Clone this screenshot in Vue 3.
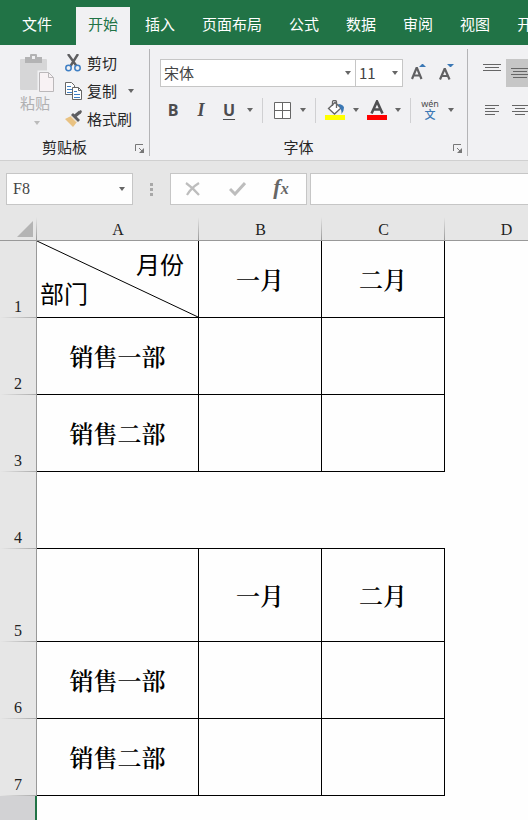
<script setup>
import { ref } from "vue";

const tabs = ["文件", "开始", "插入", "页面布局", "公式", "数据", "审阅", "视图", "开发工具"];
const activeTab = ref("开始");

const fontName = ref("宋体");
const fontSize = ref("11");
const cellName = ref("F8");
const formula = ref("");

const columns = ["A", "B", "C", "D"];

const rows = [
  { id: 1, cells: ["split", "一月", "二月"], boxed: true },
  { id: 2, cells: ["销售一部", "", ""], boxed: true },
  { id: 3, cells: ["销售二部", "", ""], boxed: true },
  { id: 4, cells: ["", "", ""], boxed: false },
  { id: 5, cells: ["", "一月", "二月"], boxed: true, tall: true },
  { id: 6, cells: ["销售一部", "", ""], boxed: true },
  { id: 7, cells: ["销售二部", "", ""], boxed: true },
];
</script>

<template>
  <div class="app">
    <nav class="tabs">
      <button
        v-for="tab in tabs"
        :key="tab"
        type="button"
        class="tab"
        :class="{ file: tab === '文件', active: tab === activeTab }"
        @click="activeTab = tab"
      >
        {{ tab }}
      </button>
    </nav>

    <div class="ribbon">
      <!-- Clipboard -->
      <section class="group clipboard">
        <div class="clip-body">
          <button type="button" class="paste">
            <svg width="35" height="39" viewBox="0 0 35 39">
              <rect x="0" y="5" width="27" height="31" rx="1" fill="#d6d6d7" />
              <path d="M5 3h5V1q0-1 1-1h5q1 0 1 1v2h5v6H5z" fill="#b3b3b4" />
              <rect x="12" y="2" width="3" height="3" fill="#f1f1f3" />
              <path d="M18.500 17.500h11l5 5v15h-16z" fill="#f8f2f4" stroke="#f1f1f3" stroke-width="2" />
              <path d="M19.500 18.500h9l5 5v14h-14z" fill="#f8f2f4" stroke="#bbb8ba" />
              <path d="M28.500 18.500v5h5" fill="none" stroke="#bbb8ba" />
            </svg>
            <span>粘贴</span>
            <i class="arrow"></i>
          </button>
          <div class="clip-list">
            <button type="button" class="clip-item">
              <svg width="17" height="18" viewBox="0 0 17 18">
                <path d="M3 0l8.500 12M13 0L5.500 12" fill="none" stroke="#5e5e60" stroke-width="2.400" />
                <circle cx="3.500" cy="14" r="2.700" fill="#f1f1f3" stroke="#3f7fc4" stroke-width="1.500" />
                <circle cx="12.500" cy="14" r="2.700" fill="#f1f1f3" stroke="#3f7fc4" stroke-width="1.500" />
              </svg>
              剪切
            </button>
            <button type="button" class="clip-item">
              <svg width="17" height="18" viewBox="0 0 17 18">
                <path d="M.5.5h6l3 3v9h-9z" fill="#fff" stroke="#666" />
                <path d="M2 4.500h4M2 7.500h5M2 10.500h5" stroke="#3f7fc4" />
                <path d="M7.500 5.500h6l3 3v9h-9z" fill="#fff" stroke="#666" />
                <path d="M13.500 5.500v3h3" fill="none" stroke="#666" />
                <path d="M9 9.500h3M9 12.500h6M9 15.500h6" stroke="#3f7fc4" />
              </svg>
              复制
              <i class="arrow"></i>
            </button>
            <button type="button" class="clip-item">
              <svg width="17" height="18" viewBox="0 0 17 18">
                <path d="M0 9l6-3 6 6-4 5z" fill="#e9c282" />
                <path d="M6 5l2-2 7 7-2 2z" fill="#5e5e60" />
                <path d="M10 6l5-4" stroke="#5e5e60" stroke-width="3.500" />
                <path d="M14 1l2-1 1 2-2 2z" fill="#5e5e60" />
                <path d="M6 6.500l6 6" stroke="#f1f1f3" stroke-width=".8" />
              </svg>
              格式刷
            </button>
          </div>
        </div>
        <footer class="group-label">
          <span>剪贴板</span>
          <button type="button" class="launcher" aria-label="剪贴板">
            <svg width="10" height="10" viewBox="0 0 10 10">
              <path d="M.5 7V.5H8M4 4l4 4" fill="none" stroke="#777" />
              <path d="M9 4v5H4z" fill="#777" />
            </svg>
          </button>
        </footer>
      </section>

      <!-- Font -->
      <section class="group font">
        <div class="font-row">
          <label class="picker wide">
            <select v-model="fontName" aria-label="字体">
              <option>宋体</option>
            </select>
            <i class="arrow"></i>
          </label>
          <label class="picker">
            <select v-model="fontSize" aria-label="字号">
              <option>11</option>
            </select>
            <i class="arrow"></i>
          </label>
          <button type="button" class="tool" aria-label="增大字号">
            <svg width="15" height="18" viewBox="0 0 15 18">
              <path d="M1 15L5.500 4h.5l4.500 11M3 11.500h6" fill="none" stroke="#606062" stroke-width="2.200" />
              <path d="M8 3l3-3h1l3 3z" fill="#3b78b5" />
            </svg>
          </button>
          <button type="button" class="tool" aria-label="减小字号">
            <svg width="15" height="18" viewBox="0 0 15 18">
              <path d="M1 15.500L5.500 5h.5l4.500 10.500M3 12h6" fill="none" stroke="#606062" stroke-width="2.200" />
              <path d="M8 0l3 3h1l3-3z" fill="#3b78b5" />
            </svg>
          </button>
        </div>
        <div class="font-row">
          <button type="button" class="tool bold">B</button>
          <button type="button" class="tool italic">I</button>
          <button type="button" class="tool underline">U</button>
          <button type="button" class="drop" aria-label="下划线"><i class="arrow"></i></button>
          <span class="sep"></span>
          <button type="button" class="tool" aria-label="边框">
            <svg width="17" height="17" viewBox="0 0 17 17">
              <path d="M.5.5h16v16H.5zM8.500.5v16M.5 8.500h16" fill="#fff" stroke="#666" />
            </svg>
          </button>
          <button type="button" class="drop" aria-label="边框选项"><i class="arrow"></i></button>
          <span class="sep"></span>
          <button type="button" class="tool" aria-label="填充颜色">
            <svg width="20" height="20" viewBox="0 0 20 20">
              <path d="M3.500 8.500l6.500-6 6 5.500-6.500 6z" fill="#fff" stroke="#666" stroke-width="1.300" />
              <path d="M7.500 6V2q0-1.500 1.500-1.500h1q1.500 0 1.500 1.500v6" fill="none" stroke="#666" stroke-width="1.300" />
              <path d="M13 4q5 0 6 3.500 0 4-2.500 6.500.5-4-3.500-10z" fill="#3b78b5" />
              <path d="M0 15h20v5H0z" fill="#ff0" />
            </svg>
          </button>
          <button type="button" class="drop" aria-label="填充选项"><i class="arrow"></i></button>
          <button type="button" class="tool" aria-label="字体颜色">
            <svg width="20" height="20" viewBox="0 0 20 20">
              <path d="M4.500 13.500L10 1.500l5.500 12M6.500 9.500h7" fill="none" stroke="#505052" stroke-width="2.600" />
              <path d="M0 15h20v5H0z" fill="#f00" />
            </svg>
          </button>
          <button type="button" class="drop" aria-label="颜色选项"><i class="arrow"></i></button>
          <span class="sep"></span>
          <button type="button" class="tool pinyin"><span>wén</span><b>文</b></button>
          <button type="button" class="drop" aria-label="拼音选项"><i class="arrow"></i></button>
        </div>
        <footer class="group-label">
          <span>字体</span>
          <button type="button" class="launcher" aria-label="字体设置">
            <svg width="10" height="10" viewBox="0 0 10 10">
              <path d="M.5 7V.5H8M4 4l4 4" fill="none" stroke="#777" />
              <path d="M9 4v5H4z" fill="#777" />
            </svg>
          </button>
        </footer>
      </section>

      <!-- Alignment -->
      <section class="group align">
        <div class="align-row">
          <button type="button" class="align-btn" aria-label="顶端对齐">
            <svg width="18" height="18" viewBox="0 0 18 18">
              <path d="M0 .5h18M2 3.500h14M0 6.500h18" stroke="#666" />
            </svg>
          </button>
          <button type="button" class="align-btn on" aria-label="垂直居中">
            <svg width="18" height="18" viewBox="0 0 18 18">
              <path d="M0 4.500h18M2 7.500h14M0 10.500h18M2 13.500h14" stroke="#666" />
            </svg>
          </button>
        </div>
        <div class="align-row">
          <button type="button" class="align-btn" aria-label="左对齐">
            <svg width="14" height="10" viewBox="0 0 14 10">
              <path d="M0 .5h14M0 3.500h10M0 6.500h14M0 9.500h10" stroke="#666" />
            </svg>
          </button>
          <button type="button" class="align-btn" aria-label="居中">
            <svg width="16" height="10" viewBox="0 0 16 10">
              <path d="M0 .5h16M3 3.500h10M0 6.500h16M3 9.500h10" stroke="#666" />
            </svg>
          </button>
        </div>
      </section>
    </div>

    <div class="formula-bar">
      <div class="name-box">
        <input v-model="cellName" type="text" aria-label="名称框" />
        <button type="button" class="drop" aria-label="名称列表"><i class="arrow"></i></button>
      </div>
      <svg class="grip" width="3" height="13" viewBox="0 0 3 13">
        <path d="M0 0h3v3H0zM0 5h3v3H0zM0 10h3v3H0z" fill="#a8a8a8" />
      </svg>
      <div class="fx-box">
        <button type="button" aria-label="取消">
          <svg width="16" height="14" viewBox="0 0 16 14">
            <path d="M1 1q7 5 13 12M14 1Q6 6 2 13" fill="none" stroke="#bdbdbd" stroke-width="2.200" />
          </svg>
        </button>
        <button type="button" aria-label="输入">
          <svg width="17" height="14" viewBox="0 0 17 14">
            <path d="M1 7l5 5L16 1" fill="none" stroke="#bdbdbd" stroke-width="3" />
          </svg>
        </button>
        <button type="button" class="fx">f<small>x</small></button>
      </div>
      <input v-model="formula" type="text" class="formula" aria-label="编辑栏" />
    </div>

    <div class="sheet">
      <table>
        <colgroup>
          <col class="col-head" />
          <col class="col-a" />
          <col v-for="n in 3" :key="n" class="col-std" />
          <col />
        </colgroup>
        <thead>
          <tr>
            <th class="corner">
              <svg width="16" height="16" viewBox="0 0 16 16">
                <path d="M16 0v16H0z" fill="#b4b4b4" />
              </svg>
            </th>
            <th v-for="col in columns" :key="col">{{ col }}</th>
            <th></th>
          </tr>
        </thead>
        <tbody>
          <tr v-for="row in rows" :key="row.id" :class="{ tall: row.tall, boxed: row.boxed }">
            <th>{{ row.id }}</th>
            <td v-for="(cell, i) in row.cells" :key="i" class="cell">
              <div v-if="cell === 'split'" class="split">
                <svg class="diagonal" width="100%" height="100%">
                  <line x1="0" y1="0" x2="100%" y2="100%" stroke="#000" />
                </svg>
                <span class="month">月份</span>
                <span>部门</span>
              </div>
              <template v-else>{{ cell }}</template>
            </td>
            <td></td>
            <td></td>
          </tr>
          <tr>
            <th class="current"></th>
            <td v-for="n in 5" :key="n"></td>
          </tr>
        </tbody>
      </table>
    </div>
  </div>
</template>

<style>
body {
  margin: 0;
  background: #fefefe;
}
</style>

<style scoped>
.app {
  display: flex;
  flex-direction: column;
  height: 100vh;
  overflow: hidden;
  background: #fefefe;
  color: #262626;
  font-family: "Noto Sans CJK SC", sans-serif;
  font-size: 15px;
}

.app * {
  box-sizing: border-box;
}

button,
input,
select {
  margin: 0;
  padding: 0;
  border: 0;
  outline: 0;
  background: none;
  color: inherit;
  font: inherit;
}

svg {
  display: block;
  flex: none;
}

.arrow {
  flex: none;
  width: 0;
  height: 0;
  border: 3px solid transparent;
  border-top: 4px solid #666;
  border-bottom: 0;
}

/* Tabs */
.tabs {
  display: flex;
  flex: none;
  gap: 3px;
  height: 45px;
  padding-top: 7px;
  overflow: hidden;
  background: #217346;
}

.tab {
  flex: none;
  padding: 0 12px 4px;
  color: #fff;
  line-height: 34px;
  white-space: nowrap;
}

.tab.file {
  padding: 0 21px 4px 22px;
}

.tab.active {
  background: #f1f1f3;
  color: #217346;
}

/* Ribbon */
.ribbon {
  display: flex;
  flex: none;
  height: 116px;
  padding: 4px 0;
  overflow: hidden;
  border-bottom: 1px solid #d0d0d0;
  background: #f1f1f3;
}

.group {
  display: flex;
  flex: none;
  flex-direction: column;
  border-right: 1px solid #b4b4b6;
}

.clipboard {
  width: 150px;
}

.font {
  width: 318px;
  padding-top: 10px;
}

.align {
  flex: 1 0 auto;
  padding: 10px 0 0 10px;
  border-right: 0;
}

.clip-body {
  display: flex;
}

.paste {
  display: flex;
  flex-direction: column;
  align-items: center;
  width: 65px;
  padding: 5px 0 0 9px;
  color: #b0b0b2;
  line-height: 20px;
}

.paste span {
  padding-right: 4px;
}

.paste .arrow {
  margin-top: 8px;
  border-top-color: #bbb;
}

.clip-item {
  display: flex;
  align-items: center;
  gap: 5px;
  height: 28px;
  padding-bottom: 1px;
  white-space: nowrap;
}

.clip-item .arrow {
  margin-left: 6px;
}

.group-label {
  display: flex;
  align-items: center;
  height: 18px;
  margin-top: auto;
  padding-right: 4px;
  line-height: 18px;
}

.group-label span {
  flex: 1;
  padding-right: 6px;
  text-align: center;
}

.launcher {
  padding-top: 4px;
}

.font-row {
  display: flex;
  align-items: center;
  height: 28px;
  padding-left: 9px;
}

.font-row + .font-row {
  margin-top: 9px;
}

.picker {
  display: flex;
  align-items: center;
  width: 48px;
  height: 28px;
  margin-left: -1px;
  padding: 0 4px 0 3px;
  border: 1px solid #c6c6c6;
  background: #fff;
  color: #444;
}

.picker.wide {
  width: 196px;
  margin-left: 1px;
}

.picker select {
  flex: 1;
  min-width: 0;
  height: 26px;
  padding-bottom: 2px;
  appearance: none;
}

.picker + .tool {
  margin-left: 1px;
}

.tool {
  display: flex;
  flex: none;
  align-items: center;
  justify-content: center;
  width: 28px;
  height: 28px;
  color: #4c4c4e;
  font-family: "Open Sans", sans-serif;
  font-size: 16px;
  font-weight: 700;
}

.tool.italic {
  font-family: "Liberation Serif", serif;
  font-size: 18px;
  font-style: italic;
}

.tool.underline {
  text-decoration: underline;
  text-decoration-thickness: 1px;
  text-underline-offset: 3px;
}

.tool.pinyin {
  flex-direction: column;
  font-family: "Noto Sans", "Noto Sans CJK SC", sans-serif;
  font-size: 9px;
  font-weight: 400;
  line-height: 10px;
}

.pinyin b {
  color: #3b78b5;
  font-size: 11px;
  font-weight: 500;
  line-height: 12px;
}

.drop {
  display: flex;
  flex: none;
  align-items: center;
  justify-content: center;
  width: 14px;
  height: 28px;
}

.sep {
  flex: none;
  width: 1px;
  height: 25px;
  margin: 0 5px;
  background: #d0d0d2;
}

.align-row {
  display: flex;
  align-items: center;
  height: 28px;
}

.align-row + .align-row {
  margin-top: 9px;
}

.align-btn {
  display: flex;
  align-items: center;
  justify-content: center;
  width: 28px;
  height: 28px;
}

.align-btn.on {
  background: #c6c6c6;
}

/* Formula bar */
.formula-bar {
  display: flex;
  flex: none;
  align-items: center;
  height: 56px;
  padding-left: 6px;
  background: #e6e6e6;
}

.name-box,
.fx-box,
.formula {
  height: 32px;
  border: 1px solid #c6c6c6;
  background: #fefefe;
}

.name-box {
  display: flex;
  align-items: center;
  width: 127px;
  padding: 0 3px 0 6px;
  color: #444;
  font-family: "Liberation Serif", serif;
  font-size: 16px;
}

.name-box input {
  flex: 1;
  min-width: 0;
}

.grip {
  margin: 0 17px;
}

.fx-box {
  display: flex;
  width: 137px;
  padding-right: 3px;
}

.fx-box button {
  display: flex;
  flex: 1;
  align-items: center;
  justify-content: center;
}

.fx-box .fx {
  align-items: baseline;
  color: #666;
  font-family: "Liberation Serif", serif;
  font-size: 22px;
  font-style: italic;
  font-weight: 700;
}

.fx small {
  font-size: 16px;
}

.formula {
  flex: 1;
  min-width: 0;
  margin-left: 3px;
  padding: 0 6px;
  border-right: 0;
}

/* Sheet */
.sheet {
  flex: 1;
  min-height: 0;
  overflow: hidden;
}

table {
  width: 100%;
  min-width: 568px;
  border-collapse: separate;
  border-spacing: 0;
  table-layout: fixed;
}

.col-head {
  width: 37px;
}

.col-a {
  width: 162px;
}

.col-std {
  width: 123px;
}

th,
td {
  padding: 0;
}

th {
  color: #222;
  font-family: "Liberation Serif", serif;
  font-size: 16px;
  font-weight: 400;
}

thead th {
  height: 24px;
  border-bottom: 1px solid #999;
  background: linear-gradient(#e6e6e6, #999) right / 1px 100% no-repeat #e6e6e6;
  line-height: 20px;
  vertical-align: bottom;
}

.corner svg {
  margin: 0 0 3px 17px;
}

tbody tr {
  height: 77px;
}

tbody tr.tall {
  height: 93px;
}

tbody th {
  border-right: 1px solid #999;
  background: linear-gradient(to right, #e6e6e6, #aaa) bottom / 100% 1px no-repeat #e6e6e6;
  line-height: 22px;
  vertical-align: bottom;
}

tbody th.current {
  border-right: 2px solid #217346;
  background: #d2d2d4;
}

.cell {
  border-bottom: 1px solid #000;
  color: #000;
  font-family: "Noto Serif CJK SC", "Noto Sans CJK SC", serif;
  font-size: 24px;
  font-weight: 600;
  line-height: 30px;
  text-align: center;
}

.boxed .cell {
  border-right: 1px solid #000;
}

.split {
  display: flex;
  position: relative;
  flex-direction: column;
  align-items: flex-start;
  height: 76px;
  padding: 8px 14px 10px 3px;
  font-family: "Noto Sans CJK SC", sans-serif;
  font-weight: 400;
  line-height: 29px;
}

.month {
  align-self: flex-end;
}

.diagonal {
  position: absolute;
  top: 0;
  left: 0;
}
</style>
